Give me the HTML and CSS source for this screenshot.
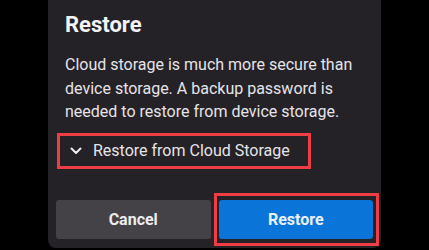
FILE: index.html
```html
<!DOCTYPE html>
<html lang="en">
<head>
<meta charset="utf-8">
<title>Restore</title>
<link rel="stylesheet" href="styles.css">
</head>
<body>
<div class="panel">
  <h1 class="title">Restore</h1>
  <p class="body">Cloud storage is much more secure than device storage. A backup password is needed to restore from device storage.</p>
  <div class="option">
    <svg class="chev" width="12" height="8" viewBox="0 0 12 8"><path d="M1.5 1.5 L6 6 L10.5 1.5" fill="none" stroke="#ecebee" stroke-width="2" stroke-linecap="round" stroke-linejoin="round"/></svg>
    <span class="option-label">Restore from Cloud Storage</span>
  </div>
  <div class="actions">
    <button class="btn btn-cancel">Cancel</button>
    <button class="btn btn-restore">Restore</button>
  </div>
</div>
</body>
</html>
```
FILE: styles.css
```css
html, body {
  margin: 0;
  padding: 0;
  background: #000;
}
body {
  font-family: Roboto, "Liberation Sans", sans-serif;
  color: #ecebee;
}
.panel {
  box-sizing: border-box;
  width: 333px;
  height: 248px;
  margin: 0 auto;
  background: #242226;
  border-radius: 0 0 8px 8px;
  padding: 12px 8px 9px;
  display: flex;
  flex-direction: column;
}
.title {
  margin: 0;
  padding-left: 9px;
  font-size: 22px;
  line-height: 26px;
  font-weight: 700;
  color: #f4f3f5;
}
.body {
  margin: 15px 0 0;
  padding-left: 9px;
  font-size: 16px;
  line-height: 23.5px;
  color: #e6e4e8;
}
.option {
  box-sizing: border-box;
  margin: 9px 0 0 1px;
  width: 254px;
  height: 36px;
  border: 3px solid #ee3d44;
  display: flex;
  align-items: center;
  padding-left: 10px;
}
.chev {
  display: block;
  margin-right: 11px;
}
.option-label {
  font-size: 16px;
  color: #e6e4e8;
}
.actions {
  margin-top: auto;
  display: flex;
  gap: 8px;
}
.btn {
  flex: 1;
  height: 39px;
  border: 0;
  border-radius: 3px;
  font-family: Roboto, "Liberation Sans", sans-serif;
  font-size: 16px;
  font-weight: 700;
  color: #ecebee;
  padding: 0;
}
.btn-cancel {
  background: #444246;
}
.btn-restore {
  position: relative;
  background: #0a74d8;
  color: #e8f1fb;
}
.btn-restore::after {
  content: "";
  position: absolute;
  top: -7px;
  bottom: -7px;
  left: -5px;
  right: -6px;
  border: 3px solid #ee3d44;
  pointer-events: none;
}
```
